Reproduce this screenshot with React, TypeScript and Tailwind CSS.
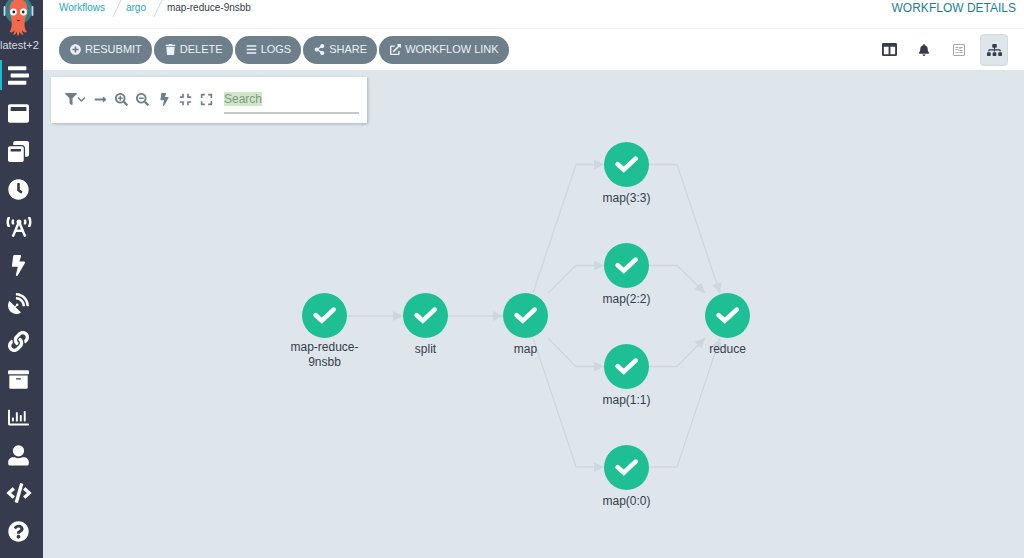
import React from "react";
import type { IconType } from "react-icons";
import {
  FaStream, FaWindowMaximize, FaWindowRestore, FaClock, FaBroadcastTower, FaBolt, FaSatelliteDish,
  FaLink, FaArchive, FaRegChartBar, FaCode, FaQuestionCircle, FaPlusCircle, FaTrash, FaBars,
  FaShareAlt, FaExternalLinkAlt, FaColumns, FaBell, FaSitemap, FaFilter, FaChevronDown,
  FaLongArrowAltRight, FaSearchPlus, FaSearchMinus, FaCompress, FaExpand,
} from "react-icons/fa";

function UserIcon({ className }: { className?: string }) {
  return (
    <svg viewBox="0 0 21 21" className={className} fill="currentColor" aria-hidden="true">
      <circle cx="10.500" cy="5.800" r="5.600" />
      <path d="M5.500 12.300h1.200a9 9 0 0 0 7.600 0h1.200c3.200 0 5.300 2.100 5.300 5v1.500c0 1-.8 1.800-1.800 1.800H2C1 20.600.2 19.800.2 18.800v-1.500c0-2.900 2.100-5 5.300-5z" />
    </svg>
  );
}

type NavItem = { label: string; Icon: IconType | typeof UserIcon; active?: boolean; wide?: boolean };

const nav: NavItem[] = [
  { label: "Workflows", Icon: FaStream, active: true },
  { label: "Workflow Templates", Icon: FaWindowMaximize },
  { label: "Cluster Workflow Templates", Icon: FaWindowRestore },
  { label: "Cron Workflows", Icon: FaClock },
  { label: "Event Flow", Icon: FaBroadcastTower, wide: true },
  { label: "Sensors", Icon: FaBolt },
  { label: "Event Sources", Icon: FaSatelliteDish },
  { label: "Pipelines", Icon: FaLink },
  { label: "Archived Workflows", Icon: FaArchive },
  { label: "Reports", Icon: FaRegChartBar },
  { label: "User", Icon: UserIcon },
  { label: "API Docs", Icon: FaCode, wide: true },
  { label: "Help", Icon: FaQuestionCircle },
];

const actions: { label: string; Icon: IconType }[] = [
  { label: "RESUBMIT", Icon: FaPlusCircle },
  { label: "DELETE", Icon: FaTrash },
  { label: "LOGS", Icon: FaBars },
  { label: "SHARE", Icon: FaShareAlt },
  { label: "WORKFLOW LINK", Icon: FaExternalLinkAlt },
];

const nodes = [
  { label: "map-reduce-9nsbb", x: 282, y: 246, wrap: true },
  { label: "split", x: 383, y: 246 },
  { label: "map", x: 483, y: 246 },
  { label: "map(3:3)", x: 584, y: 95 },
  { label: "map(2:2)", x: 584, y: 196 },
  { label: "map(1:1)", x: 584, y: 297 },
  { label: "map(0:0)", x: 584, y: 398 },
  { label: "reduce", x: 685, y: 246 },
];

const edges = [
  "M304 246H360",
  "M405 246H460",
  "M490 223L533 94.500H561",
  "M505 223L533 195.500H561",
  "M505 268L533 296.500H561",
  "M490 268L533 397H561",
  "M606 94.500H634L677 223",
  "M606 195.500H634L662 223",
  "M606 296.500H634L662 268",
  "M606 397H634L677 268",
];

function Mascot() {
  return (
    <svg viewBox="0 0 43 38" className="h-[38px] w-[43px]" aria-hidden="true">
      <circle cx="18.500" cy="10" r="14" fill="#2f7f8c" />
      <path d="M4.500 7v8M32.500 7v8" stroke="#c9d8e6" strokeWidth="1.800" strokeLinecap="round" />
      <path
        d="M18.500-1C12-1 9.500 4 9.500 10c0 5 2.300 8 2.300 13 0 4-.8 7-2.300 9 2 1 4 0 5-2 0 2-1 4-1.500 5 2 0 3-1.500 4-3.500 0 1.500 0 3.500 1 5 1-1.500 1.500-3.500 1.500-5 1 2 2 3.500 4 3.500-1-1.500-1.500-3-1.500-5 1 2 3 3 5 2-2-2-2.500-5-2.500-9 0-5 3-8 3-13 0-6-2.500-11-9-11z"
        fill="#f0694a"
      />
      <circle cx="13.500" cy="12" r="3.400" fill="#fff" />
      <circle cx="23.500" cy="12" r="3.400" fill="#fff" />
      <circle cx="13.800" cy="12" r="1.400" fill="#222838" />
      <circle cx="23.200" cy="12" r="1.400" fill="#222838" />
      <path d="M16.800 20q1.700 2.400 3.400 0z" fill="#3b1a18" />
    </svg>
  );
}

function ArtifactIcon() {
  return (
    <svg viewBox="0 0 12 12" className="size-3" fill="none" stroke="#a3a8b2" aria-hidden="true">
      <rect x=".5" y=".5" width="11" height="11" rx=".5" />
      <path d="M2.500 3.500h3M6.500 3.500h3M2.500 5.500h2l2 1h3M2.500 8.500h3M6.500 8.500h3M7 3v2" />
    </svg>
  );
}

function Separator() {
  return (
    <svg viewBox="0 0 21 18" className="h-[18px] w-[21px]" stroke="#ccd6dd" aria-hidden="true">
      <path d="M8 17L16 0" />
    </svg>
  );
}

const toolIcon = "size-[13px]";
const viewButton = "flex h-8 w-7 items-center justify-center rounded-sm";

export default function App() {
  return (
    <div className="flex h-screen overflow-hidden bg-[#dee6ec] font-['Liberation_Sans',Arial,sans-serif] text-[#363c4e]">
      <nav aria-label="Main" className="flex w-[43px] shrink-0 flex-col bg-[#363b4d] text-white">
        <div className="h-14 shrink-0 overflow-hidden">
          <Mascot />
          <div className="text-[11px] leading-[14px] whitespace-nowrap text-[#d5d9e0]">latest+2</div>
        </div>
        <ul className="flex flex-col">
          {nav.map(({ label, Icon, active, wide }) => (
            <li key={label} className="flex h-[38px] items-center">
              <a
                href="#"
                aria-label={label}
                className={`flex h-[30px] w-full items-center justify-center border-l-2 pr-2 ${active ? "border-[#18bed4]" : "border-transparent"}`}
              >
                <Icon className={wide ? "h-5 w-[26px]" : "size-[21px]"} />
              </a>
            </li>
          ))}
        </ul>
      </nav>

      <div className="flex min-w-0 flex-1 flex-col">
        <header className="shrink-0 bg-white">
          <div className="flex h-7 justify-between pr-2 pl-4">
            <div className="flex text-[10px] leading-4">
              <a href="#" className="text-[#20a9bd]">Workflows</a>
              <Separator />
              <a href="#" className="text-[#20a9bd]">argo</a>
              <Separator />
              <span>map-reduce-9nsbb</span>
            </div>
            <h1 className="text-xs leading-4 text-[#1d7f96]">WORKFLOW DETAILS</h1>
          </div>
          <div className="flex h-[42px] items-center justify-between border-t border-[#eff2f4] px-4">
            <div className="flex gap-[2px]">
              {actions.map(({ label, Icon }) => (
                <button key={label} type="button" className="flex h-7 items-center gap-1 rounded-full bg-[#6d7f8b] pr-[10px] pl-[11px] text-[11px] text-[#eef1f3]">
                  <Icon className="size-[11px]" />
                  {label}
                </button>
              ))}
            </div>
            <div className="flex items-center gap-[7px]">
              <button type="button" aria-label="Summary panel" className={viewButton}><FaColumns className="size-[15px]" /></button>
              <button type="button" aria-label="Events" className={viewButton}><FaBell className="size-3" /></button>
              <button type="button" aria-label="Artifacts" className={viewButton}><ArtifactIcon /></button>
              <button type="button" aria-label="Graph" className={`${viewButton} border border-[#d0dae1] bg-[#dee6ec]`}><FaSitemap className="h-3 w-[15px]" /></button>
            </div>
          </div>
        </header>

        <main className="relative min-h-0 flex-1 overflow-hidden">
          <svg className="absolute top-0 left-0 size-full" fill="none" stroke="#ced7df" strokeWidth="1.300" aria-hidden="true">
            <defs>
              <marker id="arrow" viewBox="0 0 10 10" refX="10" refY="5" markerWidth="10" markerHeight="10" markerUnits="userSpaceOnUse" orient="auto">
                <path d="M0 0L10 5L0 10z" fill="#ced7df" stroke="none" />
              </marker>
            </defs>
            {edges.map((d) => <path key={d} d={d} markerEnd="url(#arrow)" />)}
          </svg>
          {nodes.map(({ label, x, y, wrap }) => (
            <div key={label} className="absolute flex w-[81px] -translate-x-[41px] -translate-y-[23px] flex-col items-center" style={{ left: x, top: y }}>
              <div className="flex size-[45px] items-center justify-center rounded-full bg-[#1fbf95]">
                <svg viewBox="-12 -12 24 24" className="size-6" fill="none" stroke="#fff" strokeWidth="4.600" aria-hidden="true">
                  <path d="M-9.300-.8L-3.200 4.600L8.600-6.400" strokeLinecap="round" />
                </svg>
              </div>
              <div className={`text-center text-xs leading-[15px] ${wrap ? "mt-[2px] w-[72px]" : "mt-1"}`}>{label}</div>
            </div>
          ))}

          <div className="relative mt-[7px] ml-2 flex h-[46px] w-[316px] items-center bg-white pr-2 pl-[14px] text-[#6d7f8b] shadow-[1px_1px_3px_#a3b4bf]">
            <div className="flex flex-1 items-center justify-between pr-[11px] pb-[2px]">
              <button type="button" aria-label="Filter" className="flex items-center">
                <FaFilter className="size-3" />
                <FaChevronDown className="size-[9px]" />
              </button>
              <button type="button" aria-label="Layout direction"><FaLongArrowAltRight className={toolIcon} /></button>
              <button type="button" aria-label="Zoom in"><FaSearchPlus className={toolIcon} /></button>
              <button type="button" aria-label="Zoom out"><FaSearchMinus className={toolIcon} /></button>
              <button type="button" aria-label="Fast renderer"><FaBolt className={toolIcon} /></button>
              <button type="button" aria-label="Collapse"><FaCompress className={toolIcon} /></button>
              <button type="button" aria-label="Expand"><FaExpand className={toolIcon} /></button>
            </div>
            <div className="flex h-7 w-[135px] items-center border-b-2 border-[#c5c8c9]">
              <input
                type="text"
                aria-label="Search"
                placeholder="Search"
                className="field-sizing-content h-[14px] bg-[#cfe8c6] text-xs outline-none placeholder:text-[#84958a]"
              />
            </div>
          </div>
        </main>
      </div>
    </div>
  );
}
